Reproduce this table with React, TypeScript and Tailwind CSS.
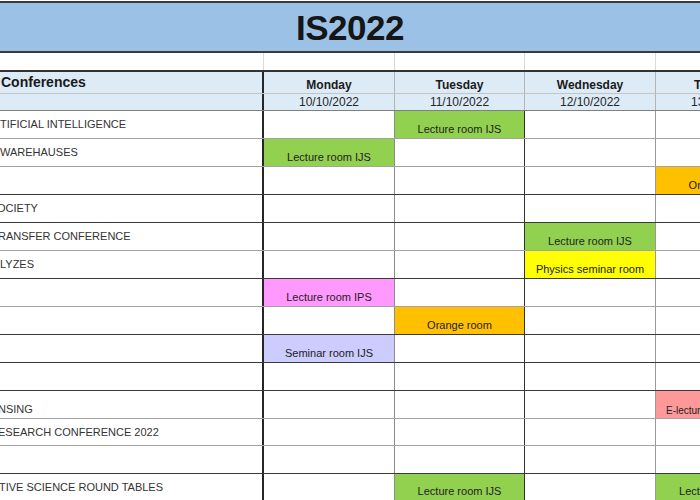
import React from 'react';

type Slot = { text: string; bg: string; small?: boolean };

interface Row {
  label: string;
  shift: string;
  line: string;
  h: string;
  bottom?: boolean;
  slots: Record<number, Slot>;
}

const GREEN = 'bg-[#92d050]';
const ORANGE = 'bg-[#ffc000]';

const days = [
  { name: 'Monday', date: '10/10/2022' },
  { name: 'Tuesday', date: '11/10/2022' },
  { name: 'Wednesday', date: '12/10/2022' },
  { name: 'Thursday', date: '13/10/2022' },
];

const rows: Row[] = [
  { label: 'TIFICIAL INTELLIGENCE', shift: 'pl-[0px]', line: 'border-[#a3a3a3]', h: 'h-[28px]', slots: { 2: { text: 'Lecture room IJS', bg: GREEN } } },
  { label: 'WAREHAUSES', shift: 'pl-[0px]', line: 'border-[#a3a3a3]', h: 'h-[28px]', slots: { 1: { text: 'Lecture room IJS', bg: GREEN } } },
  { label: '', shift: 'pl-[0px]', line: 'border-[#3a3a3a]', h: 'h-[28px]', slots: { 4: { text: 'Orange room', bg: ORANGE } } },
  { label: 'OCIETY', shift: '-ml-[3px]', line: 'border-[#3a3a3a]', h: 'h-[28px]', slots: {} },
  { label: 'RANSFER CONFERENCE', shift: '-ml-[2px]', line: 'border-[#a3a3a3]', h: 'h-[28px]', slots: { 3: { text: 'Lecture room IJS', bg: GREEN } } },
  { label: 'LYZES', shift: 'pl-[0px]', line: 'border-[#3a3a3a]', h: 'h-[28px]', slots: { 3: { text: 'Physics seminar room', bg: 'bg-[#ffff00]' } } },
  { label: '', shift: 'pl-[0px]', line: 'border-[#a3a3a3]', h: 'h-[28px]', slots: { 1: { text: 'Lecture room IPS', bg: 'bg-[#ff99ff]' } } },
  { label: '', shift: 'pl-[0px]', line: 'border-[#3a3a3a]', h: 'h-[28px]', slots: { 2: { text: 'Orange room', bg: ORANGE } } },
  { label: '', shift: 'pl-[0px]', line: 'border-[#3a3a3a]', h: 'h-[28px]', slots: { 1: { text: 'Seminar room IJS', bg: 'bg-[#ccccff]' } } },
  { label: '', shift: 'pl-[0px]', line: 'border-[#3a3a3a]', h: 'h-[28px]', slots: {} },
  { label: 'NSING', shift: '-ml-[2px]', line: 'border-[#a3a3a3]', h: 'h-[28px]', bottom: true, slots: { 4: { text: 'E-lecture room IJS', bg: 'bg-[#ff9999]', small: true } } },
  { label: 'ESEARCH CONFERENCE 2022', shift: '-ml-[2px]', line: 'border-[#a3a3a3]', h: 'h-[27px]', slots: {} },
  { label: '', shift: 'pl-[0px]', line: 'border-[#3a3a3a]', h: 'h-[28px]', slots: {} },
  { label: 'TIVE SCIENCE ROUND TABLES', shift: '-ml-[1px]', line: 'border-[#3a3a3a]', h: 'h-[27px]', slots: { 2: { text: 'Lecture room IJS', bg: GREEN }, 4: { text: 'Lecture room IJS', bg: GREEN } } },
];

// right-hand grid line of each day column in the body
const dayLines = ['border-[#8c8c8c]', 'border-[#333333]', 'border-[#9a9a9a]', 'border-[#9a9a9a]'];

const GRID = 'grid grid-cols-[264px_131px_130px_131px_131px] w-[787px]';

export default function App() {
  return (
    <div
      className="w-[700px] h-[500px] overflow-hidden bg-white text-[#262626]"
      style={{ fontFamily: '"Liberation Sans", Arial, sans-serif' }}
    >
      {/* title band */}
      <div className="mt-[1px] h-[52px] w-full border-y-2 border-[#3a3a3a] bg-[#9bc2e6] flex items-center justify-center">
        <span className="text-[35px] font-bold text-[#161616] leading-none tracking-[-0.5px]">IS2022</span>
      </div>

      {/* empty spacer row */}
      <div className={`${GRID} h-[17px]`}>
        <div className="border-r border-[#d9d9d9]" />
        <div className="border-r border-[#d9d9d9]" />
        <div className="border-r border-[#d9d9d9]" />
        <div className="border-r border-[#d9d9d9]" />
        <div />
      </div>

      {/* header: day names */}
      <div className={`${GRID} h-[23px] border-t-2 border-[#333333] bg-[#ddebf7]`}>
        <div className="flex items-center border-r-2 border-[#262626] text-[14px] font-bold text-[#1a1a1a] pl-[1px]">Conferences</div>
        {days.map((d) => (
          <div key={d.name} className="flex items-end justify-center pb-[1px] border-r border-[#b4b4b4] text-[12px] font-bold leading-[14px] text-[#1a1a1a]">
            {d.name}
          </div>
        ))}
      </div>

      {/* header: dates */}
      <div className={`${GRID} h-[18px] border-y border-t-[#c4c4c4] border-b-[#7f7f7f] bg-[#ddebf7]`}>
        <div className="border-r-2 border-[#262626]" />
        {days.map((d) => (
          <div key={d.date} className="flex items-center justify-center border-r border-[#b4b4b4] text-[12px] leading-[14px] text-[#262626]">
            {d.date}
          </div>
        ))}
      </div>

      {/* body rows */}
      {rows.map((r, i) => (
        <div key={i} className={`${GRID} ${r.h} border-b ${r.line}`}>
          <div className={`flex overflow-hidden border-r-2 border-[#262626] ${r.bottom ? 'items-end pb-[2px]' : 'items-center'}`}>
            <span className={`whitespace-nowrap text-[11px] leading-[13px] text-[#333333] ${r.shift}`}>{r.label}</span>
          </div>
          {[1, 2, 3, 4].map((c) => {
            const s = r.slots[c];
            return (
              <div
                key={c}
                className={`flex items-end overflow-hidden border-r ${dayLines[c - 1]} ${s ? s.bg : ''} ${s && s.small ? 'justify-start pl-[10px] pb-[1px]' : 'justify-center pb-[2px]'}`}
              >
                {s && (
                  <span className={`whitespace-nowrap text-[#222222] ${s.small ? 'text-[10px] leading-[12px]' : 'text-[11px] leading-[13px]'}`}>
                    {s.text}
                  </span>
                )}
              </div>
            );
          })}
        </div>
      ))}
    </div>
  );
}
